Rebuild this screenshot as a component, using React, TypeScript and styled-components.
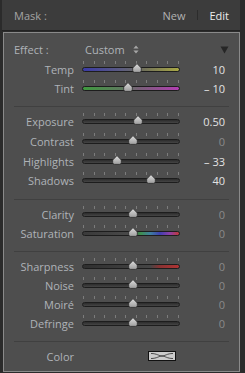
import styled, { createGlobalStyle } from 'styled-components';

const GlobalStyle = createGlobalStyle`
  html, body {
    margin: 0;
    padding: 0;
    background: #2b2b2b;
  }
  body {
    font-family: "Open Sans", "Liberation Sans", sans-serif;
    font-size: 11px;
  }
`;

const Frame = styled.div`
  width: 245px;
  height: 373px;
  box-sizing: border-box;
  padding: 0 5px 1px 2px;
  display: flex;
  flex-direction: column;
  background: #2b2b2b;
`;

const Header = styled.div`
  height: 30px;
  display: flex;
  align-items: center;
  padding: 0 11px 0 12px;
  background: #3c3c3c;
  border-bottom: 1px solid #232323;
`;

const HeaderTitle = styled.span`
  color: #a4a4a4;
  flex: 1;
`;

const HeaderLink = styled.span<{ $active?: boolean }>`
  color: ${(p) => (p.$active ? '#ececec' : '#b2b2b2')};
`;

const HeaderDivider = styled.span`
  width: 1px;
  height: 10px;
  background: #2c2c2c;
  margin: 0 11px 0 12px;
`;

const Panel = styled.div`
  flex: 1;
  margin: 1px 0 0 1px;
  border: 1px solid #8a8a8a;
  background: #4e4e4e;
  padding-top: 6px;
`;

const EffectRow = styled.div`
  height: 21px;
  display: flex;
  align-items: center;
  padding: 0 10px 0 10px;
  color: #aeb3b8;
`;

const EffectLabel = styled.span`
  width: 71px;
`;

const EffectValue = styled.span`
  display: flex;
  align-items: center;
  gap: 8px;
  flex: 1;
`;

const Group = styled.div<{ $step: number }>`
  display: grid;
  grid-auto-rows: ${(p) => p.$step}px;
`;

const Row = styled.div`
  min-height: 19px;
  display: grid;
  grid-template-columns: 70px 98px 1fr;
  column-gap: 8px;
  align-items: center;
`;

const Label = styled.span`
  text-align: right;
  color: #aeb3b8;
  white-space: nowrap;
`;

const Value = styled.span<{ $dim?: boolean }>`
  text-align: right;
  padding-right: 14px;
  color: ${(p) => (p.$dim ? '#8a8a8a' : '#e2e2e2')};
`;

const Bar = styled.div<{ $fill: string }>`
  position: relative;
  height: 5px;
  box-sizing: border-box;
  border: 1px solid #1d1d1d;
  border-radius: 3px;
  background: ${(p) => p.$fill};
`;

const Ticks = styled.div`
  position: absolute;
  left: 0;
  right: 0;
  top: -7px;
  height: 3px;
  display: flex;
  justify-content: space-between;
`;

const Tick = styled.span`
  width: 1px;
  height: 3px;
  background: #7c7c7c;
`;

const Thumb = styled.svg`
  position: absolute;
  top: -5px;
  width: 10px;
  height: 10px;
  margin-left: -5px;
`;

const Separator = styled.div`
  height: 1px;
  background: #404040;
  margin: 8px 10px 5px 10px;
`;

const SwatchCell = styled.span`
  grid-column: 2 / 4;
  padding-left: 66px;
`;

const Swatch = styled.svg`
  width: 28px;
  height: 10px;
  display: block;
`;

const plain = 'linear-gradient(#2c2c2c, #454545)';

type Slider = {
  label: string;
  value: number;
  text: string;
  min?: number;
  max?: number;
  fill?: string;
};

const groups: { step: number; sliders: Slider[] }[] = [
  {
    step: 19,
    sliders: [
      {
        label: 'Temp',
        value: 10,
        text: '10',
        fill: 'linear-gradient(to right, #3b3ba6, #5c5c80 40%, #6c6c5c 60%, #a9a845)',
      },
      {
        label: 'Tint',
        value: -10,
        text: '\u2013 10',
        fill: 'linear-gradient(to right, #3f9a3f, #5e7a5e 40%, #7a5e7a 60%, #b23eb2)',
      },
    ],
  },
  {
    step: 19.67,
    sliders: [
      { label: 'Exposure', value: 0.5, text: '0.50', min: -4, max: 4 },
      { label: 'Contrast', value: 0, text: '0' },
      { label: 'Highlights', value: -33, text: '\u2013 33' },
      { label: 'Shadows', value: 40, text: '40' },
    ],
  },
  {
    step: 19,
    sliders: [
      { label: 'Clarity', value: 0, text: '0' },
      {
        label: 'Saturation',
        value: 0,
        text: '0',
        fill: 'linear-gradient(to right, #3a3a3a, #4a4a4a 50%, #3f8f4f 60%, #3f7f9f 70%, #3f3fb0 80%, #8a3fa8 90%, #c03838)',
      },
    ],
  },
  {
    step: 19,
    sliders: [
      {
        label: 'Sharpness',
        value: 0,
        text: '0',
        fill: 'linear-gradient(to right, #2f2f2f, #454545 70%, #8a3232 80%, #b03434)',
      },
      { label: 'Noise', value: 0, text: '0' },
      { label: 'Moir\u00e9', value: 0, text: '0' },
      { label: 'Defringe', value: 0, text: '0' },
    ],
  },
];

const SliderRow = ({ s }: { s: Slider }) => {
  const min = s.min ?? -100;
  const max = s.max ?? 100;
  const pos = 2.5 + ((s.value - min) / (max - min)) * 94;
  return (
    <Row>
      <Label>{s.label}</Label>
      <Bar $fill={s.fill ?? plain}>
        <Ticks>
          {Array.from({ length: 10 }).map((_, i) => (
            <Tick key={i} />
          ))}
        </Ticks>
        <Thumb viewBox="0 0 10 10" style={{ left: pos }}>
          <defs>
            <linearGradient id="tg" x1="0" y1="0" x2="0" y2="1">
              <stop offset="0" stopColor="#dedede" />
              <stop offset="1" stopColor="#9c9c9c" />
            </linearGradient>
          </defs>
          <path
            d="M5 0.6 L9.3 5 L9.3 7.6 Q9.3 9.4 7.5 9.4 L2.5 9.4 Q0.7 9.4 0.7 7.6 L0.7 5 Z"
            fill="url(#tg)"
            stroke="#2a2a2a"
            strokeWidth="0.8"
          />
        </Thumb>
      </Bar>
      <Value $dim={s.value === 0}>{s.text}</Value>
    </Row>
  );
};

export default function App() {
  return (
    <>
      <GlobalStyle />
      <Frame>
        <Header>
          <HeaderTitle>Mask :</HeaderTitle>
          <HeaderLink>New</HeaderLink>
          <HeaderDivider />
          <HeaderLink $active>Edit</HeaderLink>
        </Header>
        <Panel>
          <EffectRow>
            <EffectLabel>Effect :</EffectLabel>
            <EffectValue>
              Custom
              <svg width="6" height="9" viewBox="0 0 6 9">
                <path d="M3 0.5 L5.6 3.6 L0.4 3.6 Z M3 8.5 L5.6 5.4 L0.4 5.4 Z" fill="#a6a6a6" />
              </svg>
            </EffectValue>
            <svg width="9" height="8" viewBox="0 0 9 8">
              <path d="M0.5 0.5 L8.5 0.5 L4.5 7.5 Z" fill="#262626" />
            </svg>
          </EffectRow>
          {groups.map((g, gi) => (
            <div key={gi}>
              <Group $step={g.step}>
                {g.sliders.map((s) => (
                  <SliderRow key={s.label} s={s} />
                ))}
              </Group>
              <Separator />
            </div>
          ))}
          <Row>
            <Label>Color</Label>
            <SwatchCell>
              <Swatch viewBox="0 0 28 10">
                <rect x="0.5" y="0.5" width="27" height="9" fill="#cbcbcb" stroke="#111" />
                <path
                  d="M3 2.5 C9 2.5 11 5 14 5 C17 5 19 2.5 25 2.5 M3 7.5 C9 7.5 11 5 14 5 C17 5 19 7.5 25 7.5"
                  fill="none"
                  stroke="#3a3a3a"
                  strokeWidth="0.9"
                />
              </Swatch>
            </SwatchCell>
          </Row>
        </Panel>
      </Frame>
    </>
  );
}
